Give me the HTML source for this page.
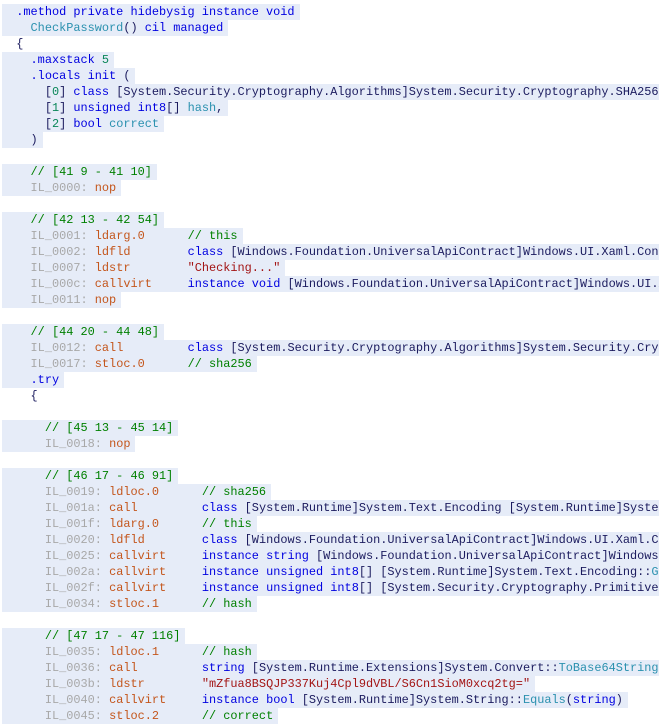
<!DOCTYPE html>
<html><head><meta charset="utf-8"><style>
html,body{margin:0;padding:0;background:#fff;width:659px;height:728px;overflow:hidden}
.w{position:absolute;top:4px;left:2px;width:657px;height:724px;overflow:hidden;font-family:"Liberation Mono",monospace;font-size:11.9px;line-height:16px;color:#1b1b5e}
.w div{height:16px;white-space:pre;overflow:hidden}
.w div span.h{background:#e6ecf8;display:inline-block;height:16px;padding-right:5px}
.k{color:#0000e0}.t{color:#2b91af}.c{color:#008000}.l{color:#a8a8a8}.o{color:#c4561c}.s{color:#a31515}.n{color:#098658}
</style></head><body><div class="w">
<div><span class="h">  <span class="k">.method private hidebysig instance void</span></span></div>
<div><span class="h">    <span class="t">CheckPassword</span>() <span class="k">cil managed</span></span></div>
<div>  {</div>
<div><span class="h">    <span class="k">.maxstack</span> <span class="n">5</span></span></div>
<div><span class="h">    <span class="k">.locals init</span> (</span></div>
<div><span class="h">      [<span class="n">0</span>] <span class="k">class</span> [System.Security.Cryptography.Algorithms]System.Security.Cryptography.SHA256</span></div>
<div><span class="h">      [<span class="n">1</span>] <span class="k">unsigned int8</span>[] <span class="t">hash</span>,</span></div>
<div><span class="h">      [<span class="n">2</span>] <span class="k">bool</span> <span class="t">correct</span></span></div>
<div><span class="h">    )</span></div>
<div></div>
<div><span class="h">    <span class="c">// [41 9 - 41 10]</span></span></div>
<div><span class="h">    <span class="l">IL_0000:</span> <span class="o">nop</span></span></div>
<div></div>
<div><span class="h">    <span class="c">// [42 13 - 42 54]</span></span></div>
<div><span class="h">    <span class="l">IL_0001:</span> <span class="o">ldarg.0</span>      <span class="c">// this</span></span></div>
<div><span class="h">    <span class="l">IL_0002:</span> <span class="o">ldfld</span>        <span class="k">class</span> [Windows.Foundation.UniversalApiContract]Windows.UI.Xaml.Controls</span></div>
<div><span class="h">    <span class="l">IL_0007:</span> <span class="o">ldstr</span>        <span class="s">"Checking..."</span></span></div>
<div><span class="h">    <span class="l">IL_000c:</span> <span class="o">callvirt</span>     <span class="k">instance void</span> [Windows.Foundation.UniversalApiContract]Windows.UI.Xaml</span></div>
<div><span class="h">    <span class="l">IL_0011:</span> <span class="o">nop</span></span></div>
<div></div>
<div><span class="h">    <span class="c">// [44 20 - 44 48]</span></span></div>
<div><span class="h">    <span class="l">IL_0012:</span> <span class="o">call</span>         <span class="k">class</span> [System.Security.Cryptography.Algorithms]System.Security.Cryptography</span></div>
<div><span class="h">    <span class="l">IL_0017:</span> <span class="o">stloc.0</span>      <span class="c">// sha256</span></span></div>
<div><span class="h">    <span class="k">.try</span></span></div>
<div>    {</div>
<div></div>
<div><span class="h">      <span class="c">// [45 13 - 45 14]</span></span></div>
<div><span class="h">      <span class="l">IL_0018:</span> <span class="o">nop</span></span></div>
<div></div>
<div><span class="h">      <span class="c">// [46 17 - 46 91]</span></span></div>
<div><span class="h">      <span class="l">IL_0019:</span> <span class="o">ldloc.0</span>      <span class="c">// sha256</span></span></div>
<div><span class="h">      <span class="l">IL_001a:</span> <span class="o">call</span>         <span class="k">class</span> [System.Runtime]System.Text.Encoding [System.Runtime]System.Text</span></div>
<div><span class="h">      <span class="l">IL_001f:</span> <span class="o">ldarg.0</span>      <span class="c">// this</span></span></div>
<div><span class="h">      <span class="l">IL_0020:</span> <span class="o">ldfld</span>        <span class="k">class</span> [Windows.Foundation.UniversalApiContract]Windows.UI.Xaml.Controls</span></div>
<div><span class="h">      <span class="l">IL_0025:</span> <span class="o">callvirt</span>     <span class="k">instance string</span> [Windows.Foundation.UniversalApiContract]Windows.UI</span></div>
<div><span class="h">      <span class="l">IL_002a:</span> <span class="o">callvirt</span>     <span class="k">instance unsigned int8</span>[] [System.Runtime]System.Text.Encoding::<span class="t">GetBytes</span></span></div>
<div><span class="h">      <span class="l">IL_002f:</span> <span class="o">callvirt</span>     <span class="k">instance unsigned int8</span>[] [System.Security.Cryptography.Primitives]</span></div>
<div><span class="h">      <span class="l">IL_0034:</span> <span class="o">stloc.1</span>      <span class="c">// hash</span></span></div>
<div></div>
<div><span class="h">      <span class="c">// [47 17 - 47 116]</span></span></div>
<div><span class="h">      <span class="l">IL_0035:</span> <span class="o">ldloc.1</span>      <span class="c">// hash</span></span></div>
<div><span class="h">      <span class="l">IL_0036:</span> <span class="o">call</span>         <span class="k">string</span> [System.Runtime.Extensions]System.Convert::<span class="t">ToBase64String</span>(</span></div>
<div><span class="h">      <span class="l">IL_003b:</span> <span class="o">ldstr</span>        <span class="s">"mZfua8BSQJP337Kuj4Cpl9dVBL/S6Cn1SioM0xcq2tg="</span></span></div>
<div><span class="h">      <span class="l">IL_0040:</span> <span class="o">callvirt</span>     <span class="k">instance bool</span> [System.Runtime]System.String::<span class="t">Equals</span>(<span class="k">string</span>)</span></div>
<div><span class="h">      <span class="l">IL_0045:</span> <span class="o">stloc.2</span>      <span class="c">// correct</span></span></div>
</div></body></html>
